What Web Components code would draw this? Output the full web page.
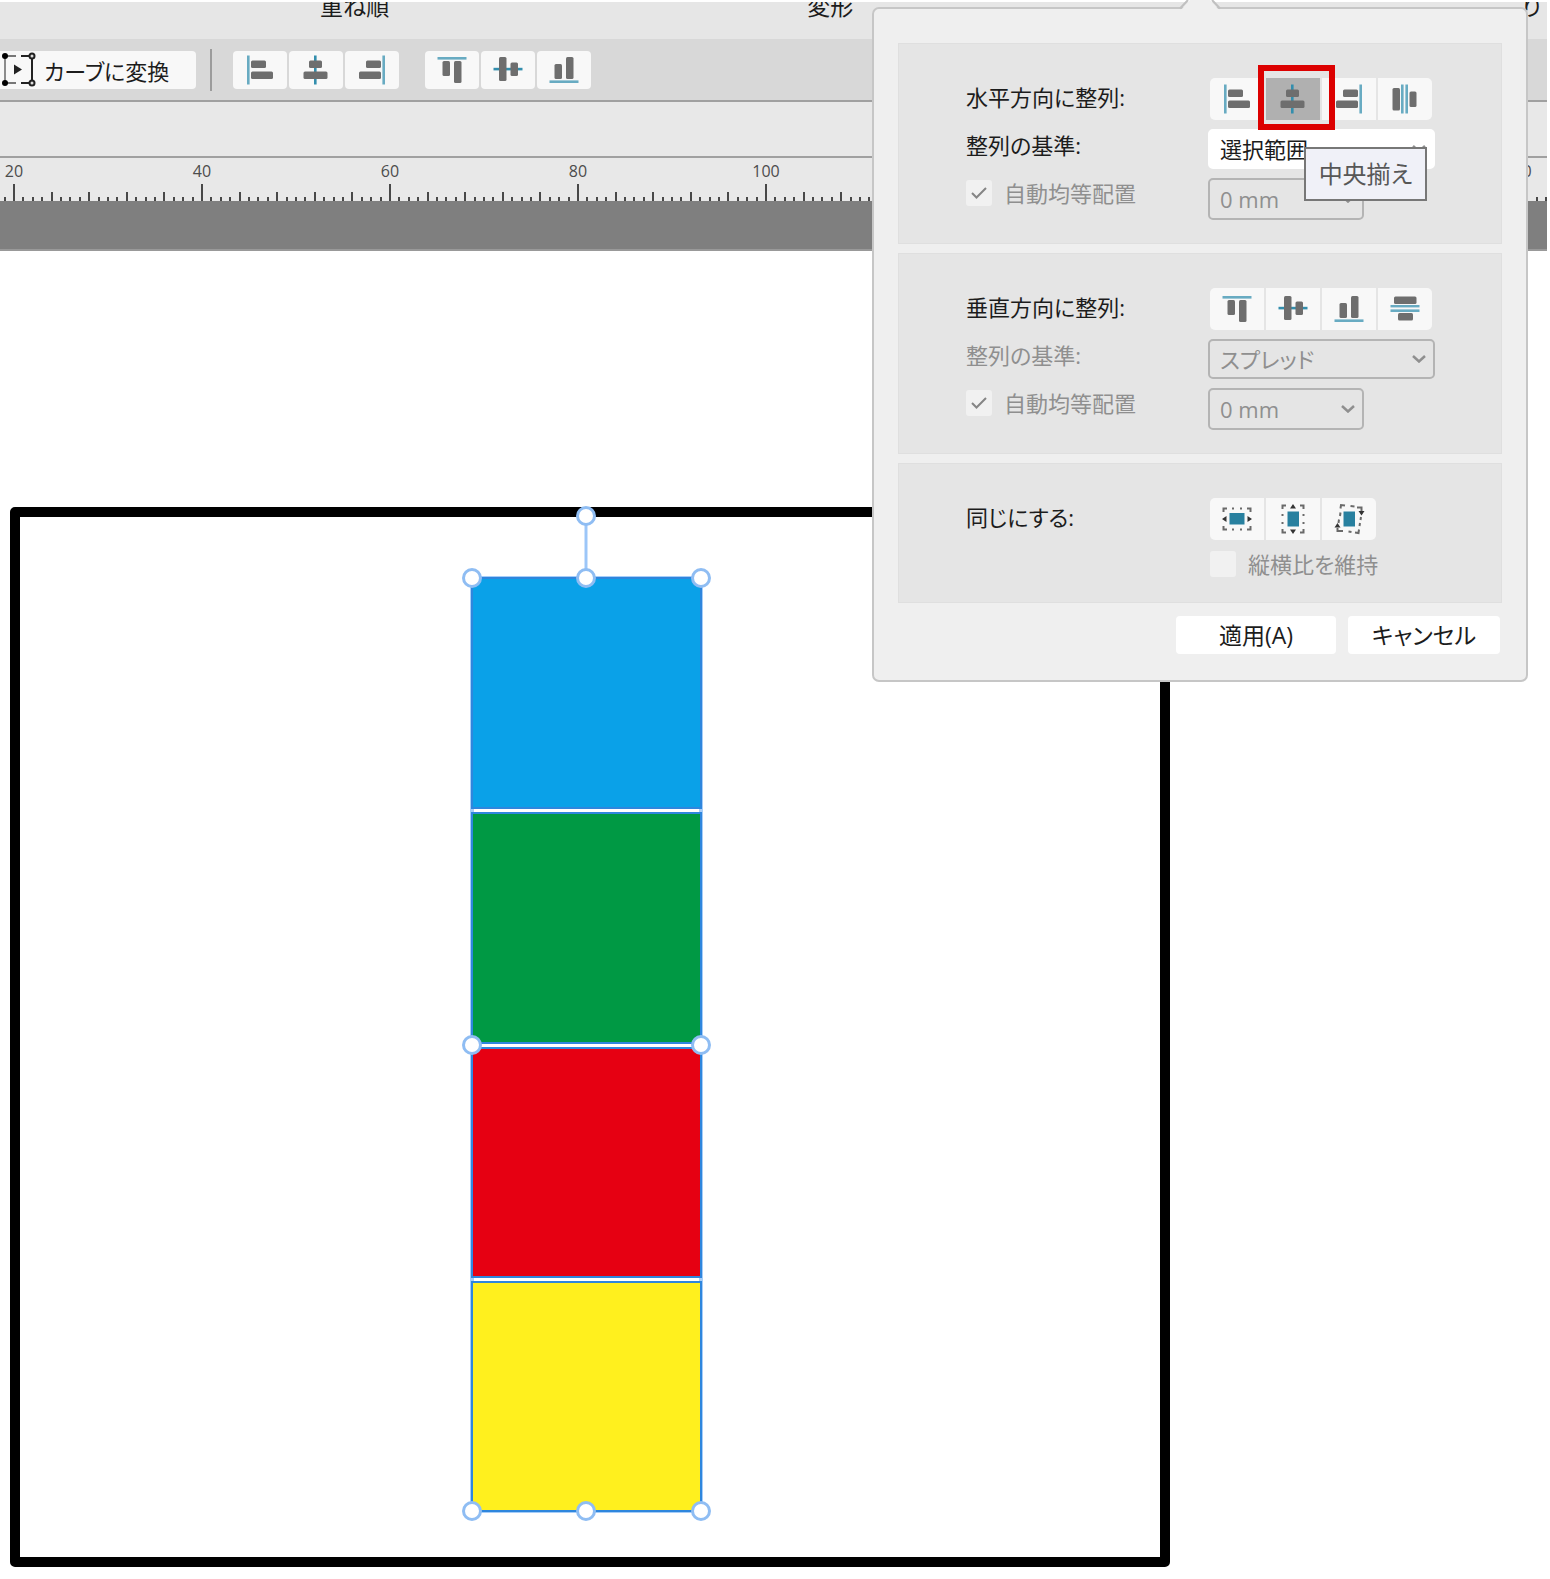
<!DOCTYPE html>
<html lang="ja">
<head>
<meta charset="utf-8">
<title>整列</title>
<style>
    html, body { height: 100%; }
    body {
        margin: 0;
        background: #fff;
        color: #1c1c1c;
        font-family: "Open Sans", "Noto Sans CJK JP", sans-serif;
        font-size: 22px;
        font-feature-settings: "palt";
    }
</style>
</head>
<body>
<layout-app>
    <ribbon-labels slot="ribbon"></ribbon-labels>
    <tool-bar slot="toolbar"></tool-bar>
    <ruler-bar slot="ruler" start="20" end="180" step="20"></ruler-bar>
    <page-canvas slot="canvas"></page-canvas>
    <align-popover slot="popover"></align-popover>
</layout-app>

<script>
const ICONS = {
    left: `<g class="line"><rect x="3" y="1.5" width="2.6" height="29"/></g>
        <rect x="7" y="6.5" width="15" height="7.5" rx="1.5"/><rect x="7" y="17.5" width="22" height="7.5" rx="1.5"/>`,
    center: `<g class="line strong"><rect x="14" y="1.5" width="2.6" height="29"/></g>
        <rect x="9" y="6.5" width="13" height="7.5" rx="1.5"/><rect x="3.5" y="17.5" width="24" height="7.5" rx="1.5"/>`,
    right: `<g class="line"><rect x="26.4" y="1.5" width="2.6" height="29"/></g>
        <rect x="10" y="6.5" width="15" height="7.5" rx="1.5"/><rect x="3" y="17.5" width="22" height="7.5" rx="1.5"/>`,
    spreadX: `<g class="line"><rect x="12" y="1.5" width="2.6" height="29"/><rect x="16.4" y="1.5" width="2.6" height="29"/></g>
        <rect x="3.5" y="5" width="7.5" height="22.5" rx="1.5"/><rect x="20.5" y="8.5" width="7" height="15.5" rx="1.5"/>`,
    top: `<g class="line"><rect x="1.5" y="3" width="29" height="2.6"/></g>
        <rect x="6.5" y="7" width="7.5" height="15" rx="1.5"/><rect x="18" y="7" width="7.5" height="22" rx="1.5"/>`,
    middle: `<g class="line strong"><rect x="1.5" y="13.8" width="29" height="2.6"/></g>
        <rect x="7" y="3" width="7.5" height="24" rx="1.5"/><rect x="18.5" y="8.5" width="7.5" height="13.5" rx="1.5"/>`,
    bottom: `<g class="line"><rect x="1.5" y="26.4" width="29" height="2.6"/></g>
        <rect x="6.5" y="10" width="7.5" height="15" rx="1.5"/><rect x="18" y="3" width="7.5" height="22" rx="1.5"/>`,
    spreadY: `<g class="line"><rect x="1.5" y="12" width="29" height="2.4"/><rect x="1.5" y="16.4" width="29" height="2.6"/></g>
        <rect x="5" y="3.5" width="22.5" height="7.5" rx="1.5"/><rect x="9" y="20" width="15" height="7.5" rx="1.5"/>`,
    sameWidth: `<rect class="core" x="8.5" y="10" width="15" height="11.5"/>
        <path class="dash" d="M2.500 9V5.500h3.500M26 5.500h3.500V9M29.500 23v3.500h-3.500M6 26.500H2.500V23M11 5.500h2M19 5.500h2M11 26.500h2M19 26.500h2"/>
        <path class="mark" d="M1 16l4.500-3v6zM31 16l-4.500-3v6z"/>`,
    sameHeight: `<rect class="core" x="10.5" y="8.5" width="11.5" height="15"/>
        <path class="dash" d="M9 2.500H5.500V6M23 2.500h3.500V6M26.500 26v3.500H23M9 29.500H5.500V26M5.500 11v2M5.500 19v2M26.500 11v2M26.500 19v2"/>
        <path class="mark" d="M16 1l-3 4.500h6zM16 31l-3-4.500h6z"/>`,
    sameRotation: `<rect class="core" x="10.5" y="8.5" width="11.5" height="15"/>
        <path class="dash" d="M7.500 5.500l.500-3.500 4 .500M7.500 9.500L7 13M6 16.500L5.500 20M17.500 3l4 .500M24 4.500h4.500V8M28 14l-.500 3M27 20l-.500 3M26 26.500l-.500 3.500-3.500-.500M18.500 29l-3-.500M10 28H4.500v-3"/>
        <path class="mark" d="M28.500 12.500l-3-4.500h6zM4.500 20l-3 4.500h6z"/>`
};

class IconButton extends HTMLElement {
    constructor() {
        super();
        this.attachShadow({ mode: 'open' });
    }

    connectedCallback() {
        this.shadowRoot.innerHTML = `
            <style>
                :host { display: block; width: 54px; height: var(--button-height, 38px); }
                button {
                    display: flex; align-items: center; justify-content: center;
                    width: 100%; height: 100%; padding: 0; border: 0;
                    background: #f8f8f8; border-radius: var(--button-radius, 4px);
                }
                :host([pressed]) button { background: #b0b0b0; border-radius: 0; }
                svg { display: block; width: 32px; height: 32px; fill: #6e6e6e; }
                .line { fill: #68abc2; }
                .strong { fill: #338ead; }
                .core { fill: #28809f; }
                .dash { fill: none; stroke: #6a6a6a; stroke-width: 2; }
                .mark { fill: #333; }
            </style>
            <button type="button" aria-label="${this.getAttribute('label')}">
                <svg viewBox="0 0 32 32" aria-hidden="true">${ICONS[this.getAttribute('icon')]}</svg>
            </button>
        `;
    }
}

class ButtonGroup extends HTMLElement {
    constructor() {
        super();
        this.attachShadow({ mode: 'open' });
        this.shadowRoot.innerHTML = `
            <style>
                :host { display: flex; gap: 2px; }
                :host([joined]) { --button-height: 42px; --button-radius: 0; padding-left: 2px; }
                :host([joined]) ::slotted(:first-child) { --button-radius: 5px 0 0 5px; }
                :host([joined]) ::slotted(:last-child) { --button-radius: 0 5px 5px 0; }
            </style>
            <slot></slot>
        `;
    }
}

class RibbonLabels extends HTMLElement {
    constructor() {
        super();
        this.attachShadow({ mode: 'open' });
        this.shadowRoot.innerHTML = `
            <style>
                :host {
                    display: flex; height: 37px; overflow: hidden; font-size: 23px;
                    border-top: 2px solid #fff; box-sizing: border-box;
                    background: #e6e6e6; padding: 0 6px 0 320px; margin-bottom: 2px;
                }
                span { line-height: 24px; margin-top: -8px; }
                .transform { margin-left: 418px; }
                .last { margin-left: auto; }
            </style>
            <span>重ね順</span>
            <span class="transform">変形</span>
            <span class="last">り</span>
        `;
    }
}

class ToolBar extends HTMLElement {
    constructor() {
        super();
        this.attachShadow({ mode: 'open' });
        this.shadowRoot.innerHTML = `
            <style>
                :host {
                    display: flex; align-items: center; height: 61px;
                    background: #d8d8d8; border-bottom: 2px solid #a0a0a0;
                }
                .convert {
                    display: flex; align-items: center; gap: 7px;
                    width: 196px; height: 38px; padding: 0 0 0 2px; border: 0;
                    border-radius: 0 4px 4px 0; background: #f8f8f8;
                    color: inherit; font: inherit; font-feature-settings: inherit;
                    white-space: nowrap;
                }
                .divider { width: 2px; height: 42px; margin: 0 21px 0 14px; background: #9c9c9c; }
                .groups { display: flex; gap: 26px; }
            </style>
            <button class="convert" type="button">
                <svg width="35" height="35" viewBox="0 0 35 35" aria-hidden="true">
                    <path d="M3 4v27" stroke="#8c8c8c" stroke-width="2"/>
                    <path d="M3 4h11M3 31h11" stroke="#777" stroke-width="2"/>
                    <path d="M19 4h11M19 31h11M30 4v27" stroke="#222" stroke-width="2" fill="none"/>
                    <circle cx="3" cy="4" r="3"/><circle cx="3" cy="31" r="3"/>
                    <circle cx="30" cy="4" r="2.5" fill="#ddd" stroke="#222" stroke-width="2"/>
                    <circle cx="30" cy="31" r="2.5" fill="#ddd" stroke="#222" stroke-width="2"/>
                    <path d="M12 12.500l8 5-8 5z" fill="#222"/>
                </svg>
                カーブに変換
            </button>
            <div class="divider"></div>
            <div class="groups">
                <button-group>
                    <icon-button icon="left" label="左揃え"></icon-button>
                    <icon-button icon="center" label="中央揃え"></icon-button>
                    <icon-button icon="right" label="右揃え"></icon-button>
                </button-group>
                <button-group>
                    <icon-button icon="top" label="上揃え"></icon-button>
                    <icon-button icon="middle" label="中間揃え"></icon-button>
                    <icon-button icon="bottom" label="下揃え"></icon-button>
                </button-group>
            </div>
        `;
    }
}

class RulerBar extends HTMLElement {
    constructor() {
        super();
        this.attachShadow({ mode: 'open' });
    }

    connectedCallback() {
        const start = Number(this.getAttribute('start'));
        const end = Number(this.getAttribute('end'));
        const step = Number(this.getAttribute('step'));
        const origin = 14;
        const unit = 9.4;
        let ticks = '';
        let labels = '';
        for (let mm = start - 1; mm <= end + 4; mm++) {
            const x = Math.round(origin + (mm - start) * unit);
            const height = mm % step === 0 ? 17 : mm % 4 === 0 ? 9 : 4;
            ticks += `M${x} 43v-${height}`;
        }
        for (let mm = start; mm <= end; mm += step) {
            const x = Math.round(origin + (mm - start) * unit);
            labels += `<text x="${x}" y="19">${mm}</text>`;
        }
        this.shadowRoot.innerHTML = `
            <style>
                :host { display: block; height: 43px; background: #e8e8e8; overflow: hidden; }
                svg { display: block; width: 100%; height: 43px; }
                path { stroke: #484848; stroke-width: 2; }
                text { font-size: 16px; fill: #4c4c4c; text-anchor: middle; }
            </style>
            <svg aria-hidden="true"><path d="${ticks}"/>${labels}</svg>
        `;
    }
}

class PageCanvas extends HTMLElement {
    constructor() {
        super();
        this.attachShadow({ mode: 'open' });
        const handles = [
            [586, 265], [472, 327], [586, 327], [701, 327],
            [472, 794], [701, 794], [472, 1260], [586, 1260], [701, 1260]
        ].map(([x, y]) => `<circle cx="${x}" cy="${y}" r="8.5"/>`).join('');
        this.shadowRoot.innerHTML = `
            <style>
                :host { display: block; position: relative; min-height: 1328px; background: #fff; overflow: hidden; }
                .frame {
                    position: absolute; left: 10px; top: 256px; box-sizing: border-box;
                    width: 1160px; height: 1060px; border: 10px solid #000; border-radius: 5px;
                }
                svg { position: absolute; left: 0; top: 0; width: 100%; height: 100%; }
                .outline { fill: none; stroke: #a6cdf9; stroke-width: 4; }
                .shapes { stroke: #2f86dd; stroke-width: 2; }
                .selection { fill: none; stroke: #9cc6f8; stroke-width: 3; }
                .handles { fill: #fff; stroke: #8fbdf3; stroke-width: 3; }
            </style>
            <div class="frame"></div>
            <svg aria-hidden="true">
                <rect class="outline" x="472" y="327" width="229" height="933"/>
                <g class="shapes">
                    <rect x="472" y="327" width="229" height="230" fill="#0aa1e8"/>
                    <rect x="472" y="562" width="229" height="230" fill="#009944"/>
                    <rect x="472" y="797" width="229" height="229" fill="#e60012"/>
                    <rect x="472" y="1031" width="229" height="229" fill="#fff01e"/>
                </g>
                <path class="selection" d="M586 265V327"/>
                <g class="handles">${handles}</g>
            </svg>
        `;
    }
}

class SelectBox extends HTMLElement {
    constructor() {
        super();
        this.attachShadow({ mode: 'open' });
    }

    connectedCallback() {
        const disabled = this.hasAttribute('disabled') ? 'disabled' : '';
        this.shadowRoot.innerHTML = `
            <style>
                :host { display: grid; align-items: center; width: 227px; height: 40px; }
                :host([short]) { width: 156px; height: 42px; }
                select, svg { grid-area: 1 / 1; }
                select {
                    appearance: none; box-sizing: border-box; width: 100%; height: 100%;
                    margin: 0; padding: 0 40px 0 10px; border: 2px solid #fff; border-radius: 5px;
                    background: #fff; color: #1c1c1c; opacity: 1;
                    font: inherit; font-feature-settings: inherit;
                }
                select:disabled { background: transparent; border-color: #b4b4b4; color: #8f8f8f; }
                svg { justify-self: end; margin-right: 9px; pointer-events: none; }
                path { fill: none; stroke: #8f8f8f; stroke-width: 2.5; }
            </style>
            <select aria-label="${this.getAttribute('label')}" ${disabled}>
                <option>${this.getAttribute('value')}</option>
            </select>
            <svg width="14" height="8" viewBox="0 0 14 8" aria-hidden="true"><path d="M1 1l6 5.500L13 1"/></svg>
        `;
    }
}

class CheckField extends HTMLElement {
    constructor() {
        super();
        this.attachShadow({ mode: 'open' });
    }

    connectedCallback() {
        const checked = this.hasAttribute('checked') ? 'checked' : '';
        this.shadowRoot.innerHTML = `
            <style>
                :host { display: block; }
                label { display: flex; align-items: center; gap: 12px; height: 100%; color: #8f8f8f; line-height: 30px; white-space: nowrap; }
                .box { display: grid; place-items: center; }
                input, svg { grid-area: 1 / 1; }
                input { appearance: none; width: 26px; height: 26px; margin: 0; background: #f1f1f1; border-radius: 3px; }
                svg { visibility: hidden; fill: none; stroke: #858585; stroke-width: 2; }
                input:checked + svg { visibility: visible; }
            </style>
            <label>
                <span class="box">
                    <input type="checkbox" ${checked} disabled>
                    <svg width="16" height="12" viewBox="0 0 16 12" aria-hidden="true"><path d="M1 6l4.500 4.500L15 1"/></svg>
                </span>
                <slot></slot>
            </label>
        `;
    }
}

class AlignSection extends HTMLElement {
    constructor() {
        super();
        this.attachShadow({ mode: 'open' });
        this.shadowRoot.innerHTML = `
            <style>
                :host {
                    display: grid; grid-template-columns: 242px 1fr; box-sizing: border-box;
                    padding: 34px 0 23px 67px; border: 1px solid #dfdfdf; background: #e5e5e5;
                }
                div { display: flex; flex-direction: column; align-items: flex-start; gap: 10px; }
                .controls { gap: 9px; }
                ::slotted([slot="label"]) { height: 38px; line-height: 38px; white-space: nowrap; }
                .controls ::slotted(check-field) { padding-left: 2px; }
            </style>
            <div><slot name="label"></slot></div>
            <div class="controls"><slot></slot></div>
        `;
    }
}

class AlignPopover extends HTMLElement {
    constructor() {
        super();
        this.attachShadow({ mode: 'open' });
        this.shadowRoot.innerHTML = `
            <style>
                :host {
                    display: flex; flex-direction: column; gap: 9px; box-sizing: border-box;
                    width: 656px; padding: 34px 24px 26px 24px;
                    border: 2px solid #c6c6c6; border-radius: 7px; background: #efefef;
                }
                .pointer { position: absolute; left: 304px; top: -9px; }
                .dim { color: #8f8f8f; }
                .active { position: relative; }
                .highlight {
                    position: absolute; z-index: 1; left: -8px; top: -13px; box-sizing: border-box;
                    width: 77px; height: 65px; border: 6px solid #dc0000; pointer-events: none;
                }
                .tooltip {
                    position: absolute; z-index: 2; left: 38px; top: 69px; box-sizing: border-box;
                    width: 123px; height: 54px; border: 2px solid #777; background: #f0f1f8;
                    color: #575757; font-size: 24px; line-height: 50px; text-align: center; white-space: nowrap;
                }
                footer { display: flex; justify-content: flex-end; gap: 12px; padding: 4px 2px 0 0; }
                footer button {
                    width: 160px; height: 38px; padding: 0; border: 0; border-radius: 4px; background: #fff;
                    color: inherit; font: inherit; font-size: 23px; line-height: 38px; font-feature-settings: inherit;
                }
                footer button + button { width: 152px; }
            </style>
            <svg class="pointer" width="44" height="11" viewBox="0 0 44 11" aria-hidden="true">
                <path d="M2 11L12 0h20L42 11z" fill="#efefef"/>
                <path d="M2 8.500L10 0M42 8.500L34 0" stroke="#c0c0c0" stroke-width="2" fill="none"/>
            </svg>
            <align-section>
                <span slot="label">水平方向に整列:</span>
                <span slot="label">整列の基準:</span>
                <check-field slot="label" checked>自動均等配置</check-field>
                <button-group joined>
                    <icon-button icon="left" label="左揃え"></icon-button>
                    <div class="active">
                        <icon-button icon="center" label="中央揃え" pressed></icon-button>
                        <div class="highlight"></div>
                        <div class="tooltip" role="tooltip">中央揃え</div>
                    </div>
                    <icon-button icon="right" label="右揃え"></icon-button>
                    <icon-button icon="spreadX" label="左右に整列"></icon-button>
                </button-group>
                <select-box label="整列の基準" value="選択範囲"></select-box>
                <select-box label="間隔" value="0 mm" short disabled></select-box>
            </align-section>
            <align-section>
                <span slot="label">垂直方向に整列:</span>
                <span slot="label" class="dim">整列の基準:</span>
                <check-field slot="label" checked>自動均等配置</check-field>
                <button-group joined>
                    <icon-button icon="top" label="上揃え"></icon-button>
                    <icon-button icon="middle" label="中間揃え"></icon-button>
                    <icon-button icon="bottom" label="下揃え"></icon-button>
                    <icon-button icon="spreadY" label="上下に整列"></icon-button>
                </button-group>
                <select-box label="整列の基準" value="スプレッド" disabled></select-box>
                <select-box label="間隔" value="0 mm" short disabled></select-box>
            </align-section>
            <align-section>
                <span slot="label">同じにする:</span>
                <button-group joined>
                    <icon-button icon="sameWidth" label="幅"></icon-button>
                    <icon-button icon="sameHeight" label="高さ"></icon-button>
                    <icon-button icon="sameRotation" label="回転"></icon-button>
                </button-group>
                <check-field>縦横比を維持</check-field>
            </align-section>
            <footer>
                <button type="button">適用(A)</button>
                <button type="button">キャンセル</button>
            </footer>
        `;
    }
}

class LayoutApp extends HTMLElement {
    constructor() {
        super();
        this.attachShadow({ mode: 'open' });
        this.shadowRoot.innerHTML = `
            <style>
                :host { display: block; position: relative; background: #fff; }
                .window { display: flex; flex-direction: column; margin-right: 3px; }
                .chrome { background: #e6e6e6; }
                .context { height: 54px; background: #e8e8e8; border-bottom: 2px solid #a0a0a0; }
                .pasteboard { height: 48px; background: #7f7f7f; border-bottom: 2px solid #999; }
                ::slotted([slot="popover"]) { position: absolute; right: 22px; top: 7px; }
            </style>
            <div class="window">
                <div class="chrome"><slot name="ribbon"></slot></div>
                <slot name="toolbar"></slot>
                <div class="context"></div>
                <slot name="ruler"></slot>
                <div class="pasteboard"></div>
            </div>
            <slot name="canvas"></slot>
            <slot name="popover"></slot>
        `;
    }
}

customElements.define('icon-button', IconButton);
customElements.define('button-group', ButtonGroup);
customElements.define('ribbon-labels', RibbonLabels);
customElements.define('tool-bar', ToolBar);
customElements.define('ruler-bar', RulerBar);
customElements.define('page-canvas', PageCanvas);
customElements.define('select-box', SelectBox);
customElements.define('check-field', CheckField);
customElements.define('align-section', AlignSection);
customElements.define('align-popover', AlignPopover);
customElements.define('layout-app', LayoutApp);
</script>
</body>
</html>
